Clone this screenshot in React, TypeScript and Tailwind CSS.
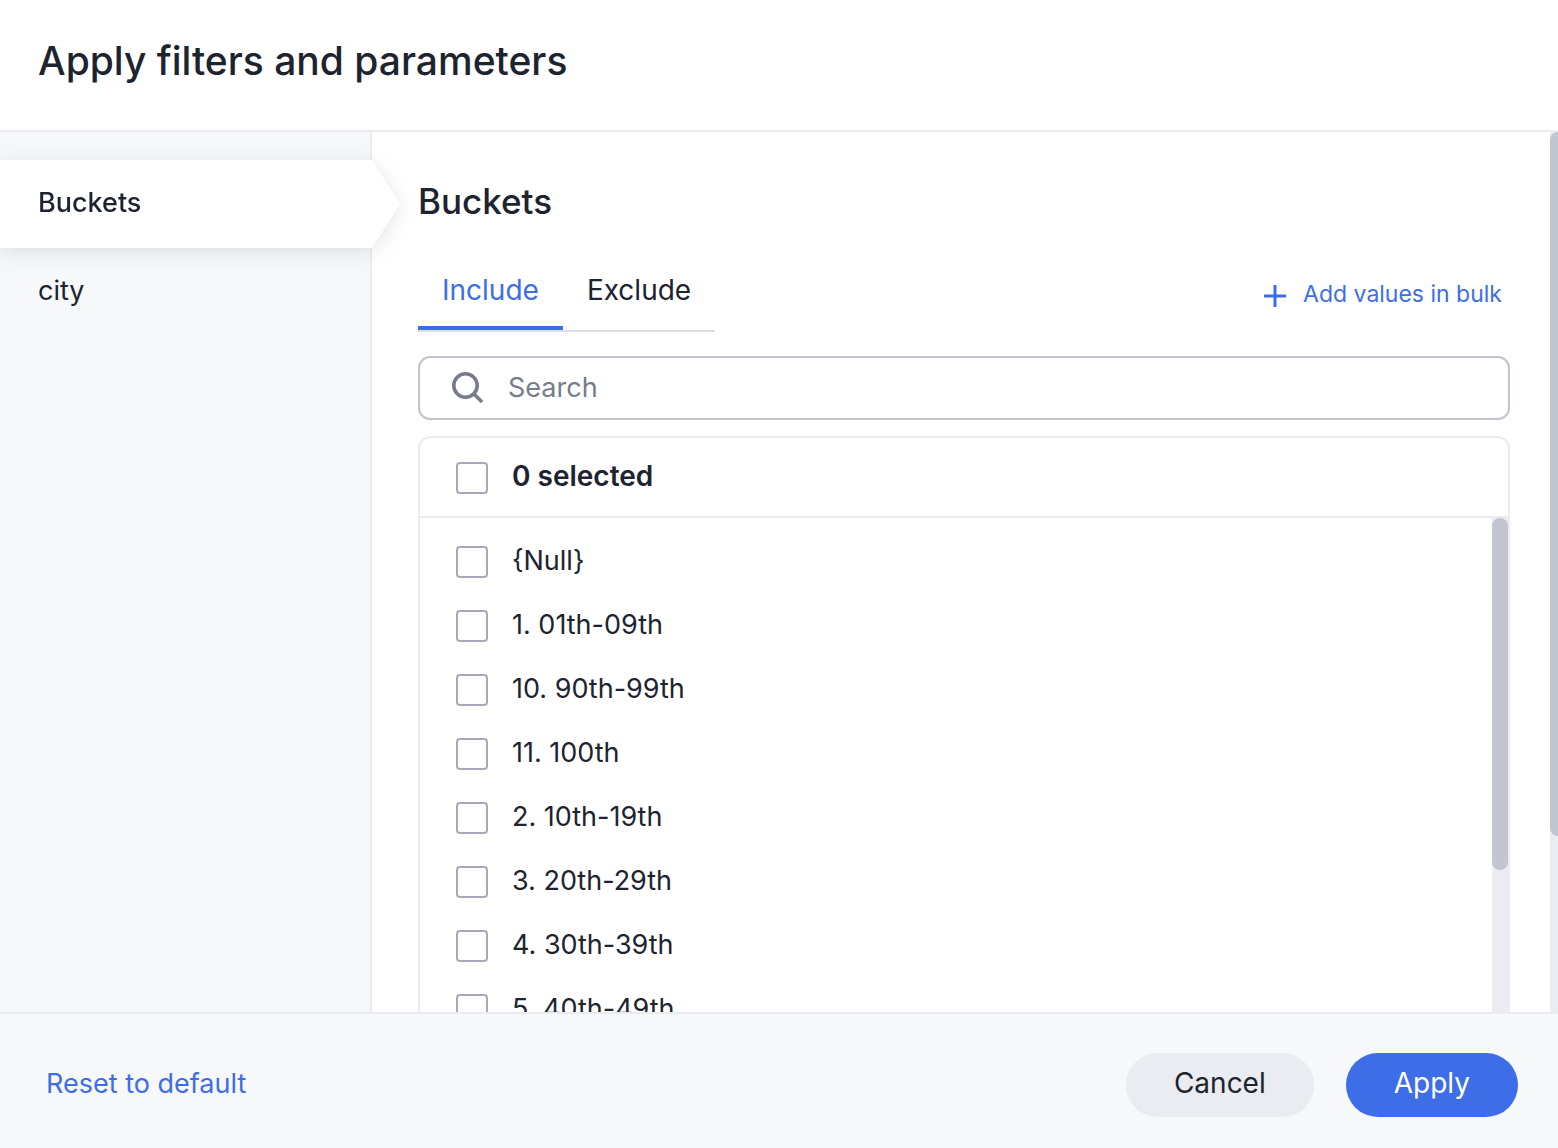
import React, { useState } from 'react'

const filters = ['Buckets', 'city']

const values = [
  '{Null}',
  '1. 01th-09th',
  '10. 90th-99th',
  '11. 100th',
  '2. 10th-19th',
  '3. 20th-29th',
  '4. 30th-39th',
  '5. 40th-49th',
]

const checkboxClass =
  'h-8 w-8 shrink-0 appearance-none rounded border-2 border-[#a5a9b9] bg-white checked:border-[#3d6ee8] checked:bg-[#3d6ee8]'

const Sidebar: React.FC<{ active: string; onSelect: (name: string) => void }> = ({ active, onSelect }) => (
  <nav className="relative z-10 flex w-[372px] shrink-0 flex-col border-r-2 border-[#eaecf2] bg-[#f6f8fa] pt-7">
    {filters.map(name =>
      name === active ? (
        <button
          key={name}
          onClick={() => onSelect(name)}
          className="relative -mr-0.5 h-22 bg-white pb-0.5 pl-[38px] text-left font-medium drop-shadow-[0_4px_10px_rgba(0,0,0,0.1)]"
        >
          {name}
          <svg className="absolute top-0 left-full h-22 w-7" viewBox="0 0 28 88" fill="#fff">
            <path d="M0 0L28 44L0 88Z" />
          </svg>
        </button>
      ) : (
        <button key={name} onClick={() => onSelect(name)} className="h-22 pb-0.5 pl-[38px] text-left">
          {name}
        </button>
      )
    )}
  </nav>
)

const App: React.FC = () => {
  const [active, setActive] = useState('Buckets')
  const [mode, setMode] = useState('Include')
  const [selected, setSelected] = useState<string[]>([])

  const toggle = (value: string) => {
    setSelected(selected.includes(value) ? selected.filter(v => v !== value) : [...selected, value])
  }

  const toggleAll = () => {
    setSelected(selected.length === values.length ? [] : values)
  }

  return (
    <div className="flex h-screen flex-col bg-white font-['Inter',sans-serif] text-[27px] leading-9 text-[#1d232f]">
      <header className="shrink-0 border-b-2 border-[#eaecf2] px-[38px] pt-9 pb-11">
        <h1 className="text-[39px] leading-[50px] font-medium">Apply filters and parameters</h1>
      </header>

      <div className="flex min-h-0 flex-1">
        <Sidebar active={active} onSelect={setActive} />

        <main className="flex min-w-0 flex-1 flex-col overflow-hidden pt-12 pr-10 pl-[46px]">
          <h2 className="text-[35px] leading-[42px] font-medium">{active}</h2>

          <div className="mt-[34px] flex shrink-0 items-start justify-between">
            <div role="tablist" className="flex border-b-2 border-[#dce0e6] text-[28px]">
              {['Include', 'Exclude'].map(tab => (
                <button
                  key={tab}
                  role="tab"
                  aria-selected={tab === mode}
                  onClick={() => setMode(tab)}
                  className={
                    tab === mode
                      ? 'h-[74px] border-b-4 border-[#3d6ee8] px-6 pb-0.5 text-[#3d6ee8]'
                      : 'h-[74px] border-b-4 border-transparent px-6 pb-0.5'
                  }
                >
                  {tab}
                </button>
              ))}
            </div>
            <button className="flex items-center gap-4 pt-5 pr-2 text-[23px] leading-9 text-[#3d6ee8]">
              <svg className="mt-1 h-6 w-6" viewBox="0 0 24 24" stroke="currentColor" strokeWidth="3">
                <path d="M1 12H23M12 1V23" />
              </svg>
              Add values in bulk
            </button>
          </div>

          <div className="mt-6 flex h-16 shrink-0 items-center rounded-xl border-2 border-[#c0c4cf] pl-8">
            <svg className="h-8 w-8" viewBox="0 0 32 32" fill="none" stroke="#777c8a" strokeWidth="3.6">
              <circle cx="13.5" cy="13.5" r="11.7" />
              <path d="M21.5 21.5L30 30" />
            </svg>
            <input
              type="text"
              aria-label="Search"
              placeholder="Search"
              className="ml-6 min-w-0 flex-1 bg-transparent outline-none placeholder:text-[#777c8a]"
            />
          </div>

          <div className="mt-4 flex min-h-0 flex-1 flex-col overflow-hidden rounded-t-xl border-2 border-b-0 border-[#eaecf2]">
            <label className="flex h-20 shrink-0 items-center gap-6 border-b-2 border-[#eaecf2] px-9 pt-0.5 text-[28px] font-semibold">
              <input
                type="checkbox"
                checked={selected.length === values.length}
                onChange={toggleAll}
                className={checkboxClass}
              />
              <span className="pb-1">{selected.length} selected</span>
            </label>
            <div className="flex min-h-0 flex-1">
              <ul className="min-w-0 flex-1 overflow-hidden pt-3">
                {values.map(value => (
                  <li key={value}>
                    <label className="flex h-16 items-center gap-6 px-9">
                      <input
                        type="checkbox"
                        checked={selected.includes(value)}
                        onChange={() => toggle(value)}
                        className={checkboxClass}
                      />
                      <span className="pb-0.5">{value}</span>
                    </label>
                  </li>
                ))}
              </ul>
              <div className="w-4 shrink-0 bg-[#eaecf2]">
                <div className="h-[352px] rounded-full bg-[#c2c6d0]" />
              </div>
            </div>
          </div>
        </main>

        <div className="w-2 shrink-0 overflow-hidden bg-[#eaecf2]">
          <div className="h-4/5 w-4 rounded-full bg-[#c2c6d0]" />
        </div>
      </div>

      <footer className="relative z-20 flex shrink-0 items-center justify-between border-t-2 border-[#eaecf2] bg-[#f6f8fa] pt-[39px] pr-10 pb-[31px] pl-[46px]">
        <button className="pb-0.5 text-[#3d6ee8]">Reset to default</button>
        <div className="flex gap-8 text-[28px]">
          <button className="h-16 rounded-full bg-[#ebecf1] px-12 pb-1">Cancel</button>
          <button className="h-16 rounded-full bg-[#3d6ee8] px-12 pb-1 text-white">Apply</button>
        </div>
      </footer>
    </div>
  )
}

export default App
